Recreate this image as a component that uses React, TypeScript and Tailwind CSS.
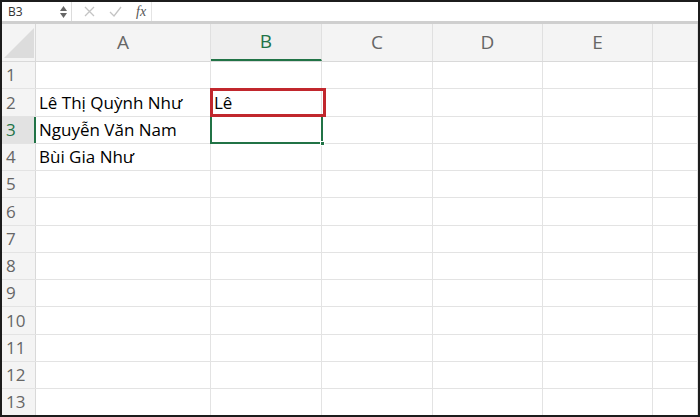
import React from "react";

const cols = ["A", "B", "C", "D", "E", ""];
const colW = ["w-[175px]", "w-[111px]", "w-[111px]", "w-[110px]", "w-[110px]", "flex-1"];
const data: Record<number, string[]> = {
  2: ["Lê Thị Quỳnh Như", "Lê"],
  3: ["Nguyễn Văn Nam"],
  4: ["Bùi Gia Như"],
};

export default function App() {
  const rows = Array.from({ length: 13 }, (_, i) => i + 1);
  return (
    <div
      className="w-[700px] h-[417px] overflow-hidden border-2 border-[#1c1c1c] bg-white flex flex-col"
      style={{ fontFamily: '"Open Sans", "Noto Sans", sans-serif' }}
    >
      {/* formula bar */}
      <div className="h-[22px] flex items-center bg-white border-b-[3px] border-[#cfcfcf] shrink-0">
        <div className="w-[70px] h-full flex items-center pl-[6px] pr-[4px] border-r border-[#dcdcdc]">
          <span className="text-[12px] text-[#333] flex-1">B3</span>
          <div className="flex flex-col items-center gap-[2px] text-[#666]">
            <svg width="7" height="5" viewBox="0 0 7 5"><path d="M3.5 0L7 5H0z" fill="currentColor" /></svg>
            <svg width="7" height="5" viewBox="0 0 7 5"><path d="M0 0h7L3.5 5z" fill="currentColor" /></svg>
          </div>
        </div>
        <div className="w-[80px] h-full flex items-center pl-[12px] gap-[14px] border-r border-[#e4e4e4] text-[#c4c4c4]">
          <svg width="11" height="11" viewBox="0 0 11 11"><path d="M1 1l9 9M10 1l-9 9" stroke="currentColor" strokeWidth="1.3" /></svg>
          <svg width="13" height="11" viewBox="0 0 13 11"><path d="M1 6l4 4 7-9" stroke="currentColor" strokeWidth="1.3" fill="none" /></svg>
          <span className="text-[14px] italic text-[#555]" style={{ fontFamily: '"Liberation Serif", serif' }}>
            fx
          </span>
        </div>
        <div className="flex-1" />
      </div>

      <div className="relative flex-1">
        {/* header row */}
        <div className="flex h-[38px] bg-[#f4f4f4] border-b border-[#d9d9d9]">
          <div className="w-[34px] border-r border-[#d9d9d9] relative overflow-hidden">
            <svg className="absolute left-[2px] top-[4px]" width="30" height="30" viewBox="0 0 30 30">
              <path d="M30 0V30H0z" fill="#dcdcdc" />
            </svg>
          </div>
          {cols.map((c, i) => (
            <div
              key={i}
              className={`${colW[i]} flex items-center justify-center text-[19px] ${
                c === "B"
                  ? "text-[#217346] bg-[#efefef] border-b-2 border-b-[#217346] border-r border-r-[#e0e0e0]"
                  : "text-[#666] border-r border-[#e0e0e0]"
              }`}
            >
              {c}
            </div>
          ))}
        </div>

        {rows.map((r) => (
          <div key={r} className="flex h-[27.25px] border-b border-[#e3e3e3]">
            <div
              className={`w-[34px] flex items-center pl-[4px] text-[17px] ${
                r === 3
                  ? "bg-[#e2e2e2] text-[#217346] border-r-2 border-[#217346]"
                  : "bg-[#f4f4f4] text-[#666] border-r border-[#d9d9d9]"
              }`}
            >
              {r}
            </div>
            {cols.map((_, i) => (
              <div
                key={i}
                className={`${colW[i]} flex items-center pl-[3px] text-[17px] text-black whitespace-nowrap border-r border-[#e3e3e3]`}
              >
                {data[r]?.[i] ?? ""}
              </div>
            ))}
          </div>
        ))}

        {/* selected cell B3 */}
        <div className="absolute left-[208px] top-[91px] w-[113px] h-[29px] border-2 border-[#217346] pointer-events-none">
          <div className="absolute -right-[4px] -bottom-[4px] w-[5px] h-[5px] bg-[#217346] border border-white" />
        </div>
        {/* highlighted B2 */}
        <div className="absolute left-[208px] top-[64px] w-[116px] h-[29px] border-[3px] border-[#c1272d] pointer-events-none" />
      </div>
    </div>
  );
}
